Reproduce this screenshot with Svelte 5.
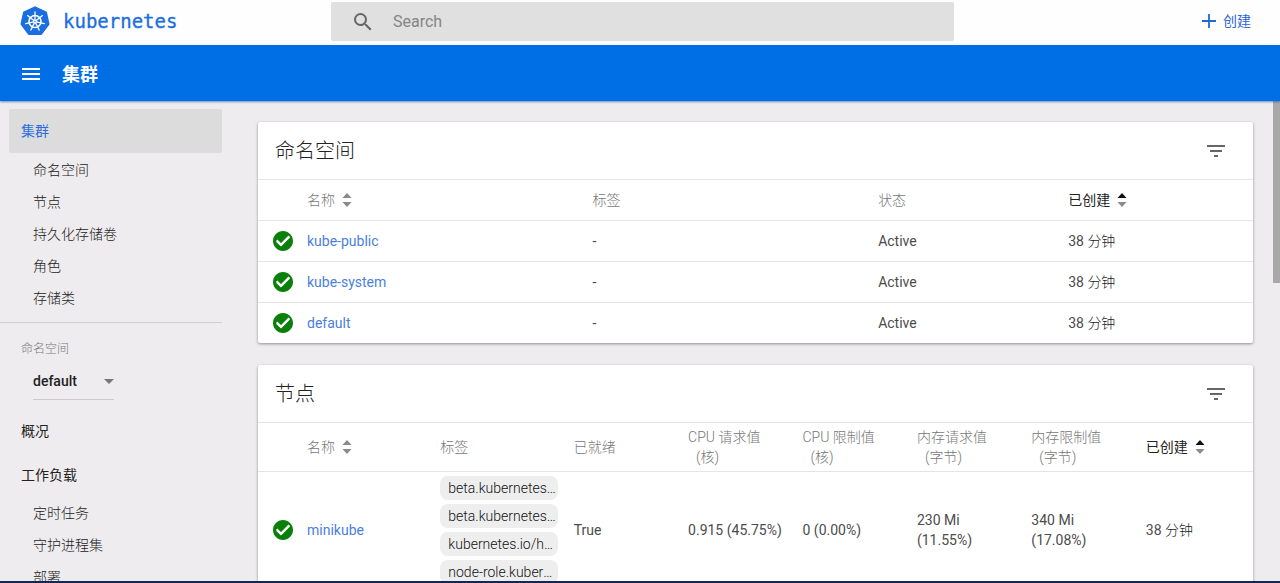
<script>
  const clusterItems = ['命名空间', '节点', '持久化存储卷', '角色', '存储类'];
  const workloadItems = ['定时任务', '守护进程集', '部署'];
  const namespaces = ['kube-public', 'kube-system', 'default'];
  const resourceHeads = [
    ['CPU 请求值', '(核)'],
    ['CPU 限制值', '(核)'],
    ['内存请求值', '(字节)'],
    ['内存限制值', '(字节)'],
  ];
  const nodeLabels = [
    'beta.kubernetes.io/arch: amd64',
    'beta.kubernetes.io/os: linux',
    'kubernetes.io/hostname: minikube',
    'node-role.kubernetes.io/master',
  ];
  const spokes = [0, 1, 2, 3, 4, 5, 6].map((n) => (n * 360) / 7);
</script>

{#snippet sortIcon(active)}
  <svg class="sort" viewBox="0 0 10 14" width="10" height="14" aria-hidden="true">
    <path d="M5 0 9.500 5H.5z" fill={active ? '#111' : '#8a8a8a'} />
    <path d="M5 14 .5 9h9z" fill="#8a8a8a" />
  </svg>
{/snippet}

{#snippet okIcon()}
  <svg class="ok" viewBox="2 2 20 20" width="20" height="20" role="img" aria-label="Ready">
    <path
      fill="#0a800a"
      d="M12 2C6.480 2 2 6.480 2 12s4.480 10 10 10 10-4.480 10-10S17.520 2 12 2zm-2 15-5-5 1.410-1.410L10 14.170l7.590-7.590L19 8l-9 9z"
    />
    <path d="M6 12.200 10 16l8.200-8.200" fill="none" stroke="#fff" stroke-width="2.200" />
  </svg>
{/snippet}

{#snippet cardHead(title)}
  <header class="card-head">
    <h2>{title}</h2>
    <button class="icon-btn" aria-label="Filter">
      <svg viewBox="0 0 24 24" width="24" height="24">
        <path fill="#666" d="M10 18h4v-2h-4v2zM3 6v2h18V6H3zm3 7h12v-2H6v2z" />
      </svg>
    </button>
  </header>
{/snippet}

<div class="page">
  <div class="topbar">
    <a class="brand" href="#home">
      <svg viewBox="0 0 30 30" width="30" height="30" aria-hidden="true">
        <path
          d="M15 1.500 25.800 6.600 28.300 18 21 27.800H9L1.700 18 4.200 6.600z"
          fill="#1a6ee0"
          stroke="#1a6ee0"
          stroke-width="2.400"
          stroke-linejoin="round"
        />
        <g fill="none" stroke="#fff">
          <circle cx="15" cy="15.500" r="6" stroke-width="1.600" />
          {#each spokes as angle}
            <path
              d="M15 14V6"
              stroke-width="1.300"
              stroke-linecap="round"
              transform="rotate({angle} 15 15.500)"
            />
          {/each}
        </g>
        <circle cx="15" cy="15.500" r="1.900" fill="#fff" />
        <circle cx="15" cy="15.500" r=".7" fill="#1a6ee0" />
      </svg>
      <span>kubernetes</span>
    </a>
    <label class="search">
      <svg viewBox="0 0 24 24" width="24" height="24" aria-hidden="true">
        <path
          fill="#666"
          d="M15.500 14h-.79l-.28-.27A6.470 6.470 0 0 0 16 9.500 6.500 6.500 0 1 0 9.500 16c1.610 0 3.090-.59 4.230-1.570l.27.28v.79l5 4.990L20.490 19l-4.990-5zm-6 0C7.010 14 5 11.990 5 9.500S7.010 5 9.500 5 14 7.010 14 9.500 11.990 14 9.500 14z"
        />
      </svg>
      <input type="text" placeholder="Search" aria-label="Search" />
    </label>
    <button class="create">
      <svg viewBox="0 0 14 14" width="14" height="14" aria-hidden="true">
        <path d="M7 0v14M0 7h14" stroke="#1f69cf" stroke-width="1.800" />
      </svg>
      创建
    </button>
  </div>

  <div class="actionbar">
    <button class="icon-btn" aria-label="Menu">
      <svg viewBox="0 0 18 14" width="18" height="14">
        <path d="M0 1h18M0 6h18M0 11h18" stroke="#fff" stroke-width="2" />
      </svg>
    </button>
    <h1>集群</h1>
  </div>

  <div class="body">
    <nav>
      <a class="active" href="#cluster">集群</a>
      {#each clusterItems as item}
        <a class="sub" href="#{item}">{item}</a>
      {/each}
      <hr />
      <label class="ns-label" for="ns">命名空间</label>
      <div class="ns">
        <select id="ns"><option>default</option></select>
        <svg viewBox="0 0 10 5" width="10" height="5" aria-hidden="true">
          <path d="M0 0h10L5 5z" fill="#777" />
        </svg>
      </div>
      <a class="top" href="#overview">概况</a>
      <a class="top" href="#workloads">工作负载</a>
      {#each workloadItems as item}
        <a class="sub" href="#{item}">{item}</a>
      {/each}
    </nav>

    <main>
      <section class="card">
        {@render cardHead('命名空间')}
        <table>
          <colgroup>
            <col class="c-icon" /><col class="c-wide" /><col class="c-wide" /><col class="c-mid" /><col />
          </colgroup>
          <thead>
            <tr>
              <th></th>
              <th>名称{@render sortIcon(false)}</th>
              <th>标签</th>
              <th>状态</th>
              <th class="sorted">已创建{@render sortIcon(true)}</th>
            </tr>
          </thead>
          <tbody>
            {#each namespaces as name}
              <tr>
                <td>{@render okIcon()}</td>
                <td><a href="#{name}">{name}</a></td>
                <td>-</td>
                <td>Active</td>
                <td>38 <span class="cjk">分钟</span></td>
              </tr>
            {/each}
          </tbody>
        </table>
      </section>

      <section class="card">
        {@render cardHead('节点')}
        <table class="nodes">
          <colgroup>
            <col class="c-icon" /><col class="c-name" /><col class="c-name" />
            <col class="c-num" /><col class="c-num" /><col class="c-num" /><col class="c-num" /><col class="c-num" />
            <col />
          </colgroup>
          <thead>
            <tr>
              <th></th>
              <th>名称{@render sortIcon(false)}</th>
              <th>标签</th>
              <th>已就绪</th>
              {#each resourceHeads as [label, unit]}
                <th>{label}<span class="unit">{unit}</span></th>
              {/each}
              <th class="sorted">已创建{@render sortIcon(true)}</th>
            </tr>
          </thead>
          <tbody>
            <tr>
              <td>{@render okIcon()}</td>
              <td><a href="#minikube">minikube</a></td>
              <td>
                <div class="chips">
                  {#each nodeLabels as label}
                    <span class="chip">{label}</span>
                  {/each}
                </div>
              </td>
              <td>True</td>
              <td>0.915 (45.75%)</td>
              <td>0 (0.00%)</td>
              <td>230 Mi<br />(11.55%)</td>
              <td>340 Mi<br />(17.08%)</td>
              <td>38 <span class="cjk">分钟</span></td>
            </tr>
          </tbody>
        </table>
      </section>
    </main>
    <div class="thumb"></div>
  </div>
  <div class="edge"></div>
</div>

<style>
  :global(body) {
    margin: 0;
  }
  .page {
    display: flex;
    flex-direction: column;
    height: 100vh;
    overflow: hidden;
    background: #eeecee;
    color: #333;
    font: 14px/20px Roboto, 'Noto Sans CJK SC', sans-serif;
  }
  a {
    color: inherit;
    text-decoration: none;
  }
  button {
    border: 0;
    padding: 0;
    background: none;
    font: inherit;
    cursor: pointer;
  }
  svg {
    display: block;
  }
  h1,
  h2 {
    margin: 0;
  }

  .topbar {
    display: grid;
    grid-template-columns: 1fr 623px 1fr;
    align-items: center;
    flex: none;
    box-sizing: border-box;
    height: 45px;
    padding: 0 15px 4px 20px;
    background: #fefefe;
  }
  .brand {
    display: flex;
    align-items: center;
    gap: 13px;
    color: #1a6ee0;
    font: 19px/24px 'DejaVu Sans Mono', monospace;
    -webkit-text-stroke: 0.3px #1a6ee0;
  }
  .search {
    display: flex;
    align-items: center;
    gap: 18px;
    height: 39px;
    margin-top: 2px;
    padding-left: 20px;
    border-radius: 2px;
    background: #dfe0df;
  }
  .search input {
    flex: 1;
    min-width: 0;
    border: 0;
    padding: 0;
    outline: 0;
    background: none;
    color: #333;
    font: 16px/20px Roboto, sans-serif;
  }
  .search input::placeholder {
    color: #858585;
    opacity: 1;
  }
  .create {
    display: flex;
    align-items: center;
    justify-self: end;
    gap: 7px;
    margin-right: 14px;
    color: #2f67d6;
  }

  .actionbar {
    display: flex;
    align-items: center;
    gap: 22px;
    flex: none;
    z-index: 1;
    box-sizing: border-box;
    height: 56px;
    padding: 3px 22px 0;
    background: #006fe5;
    color: #fff;
    box-shadow: 0 1px 2px rgba(20, 80, 160, 0.6);
  }
  .actionbar h1 {
    font-size: 18px;
    font-weight: 700;
    line-height: 24px;
  }

  .body {
    position: relative;
    display: flex;
    flex: 1;
    min-height: 0;
    overflow: hidden;
  }
  nav {
    display: flex;
    flex-direction: column;
    flex: none;
    width: 222px;
    padding-top: 8px;
  }
  nav a {
    flex: none;
  }
  nav .active {
    margin: 0 0 1px 9px;
    padding: 12px;
    border-radius: 2px;
    background: #dddcdd;
    color: #2a6ce0;
  }
  nav .sub {
    padding: 6px 0 6px 33px;
    color: #222;
    font-weight: 300;
  }
  nav .top {
    padding: 12px 0 12px 21px;
    color: #222;
  }
  hr {
    width: 100%;
    margin: 8px 0 0;
    border: 0;
    border-top: 1px solid #d0ced0;
  }
  .ns-label {
    margin: 16px 0 0 21px;
    color: #777;
    font-size: 12px;
    font-weight: 300;
  }
  .ns {
    display: flex;
    align-items: center;
    width: 81px;
    margin: 4px 0 9px 33px;
    border-bottom: 1px solid #ccc;
  }
  .ns select {
    flex: 1;
    min-width: 0;
    height: 36px;
    border: 0;
    padding: 0;
    appearance: none;
    background: none;
    color: #222;
    font: 500 14px/20px Roboto, sans-serif;
  }

  main {
    display: flex;
    flex-direction: column;
    gap: 22px;
    flex: 1;
    min-width: 0;
    padding: 21px 27px 0 36px;
  }
  .card {
    flex: none;
    border-radius: 2px;
    background: #fff;
    box-shadow: 0 1px 3px rgba(0, 0, 0, 0.4);
  }
  .card-head {
    display: flex;
    align-items: center;
    justify-content: space-between;
    height: 57px;
    padding: 0 25px 0 17px;
  }
  h2 {
    color: #222;
    font-size: 20px;
    font-weight: 300;
    line-height: 28px;
  }
  table {
    width: 100%;
    border-collapse: separate;
    border-spacing: 0;
    table-layout: fixed;
  }
  .c-icon {
    width: 49px;
  }
  .c-wide {
    width: 28.7%;
  }
  .c-mid {
    width: 19.1%;
  }
  .c-name {
    width: 13.4%;
  }
  .c-num {
    width: 11.5%;
  }
  th,
  td {
    height: 40px;
    padding: 0;
    border-top: 1px solid #e4e4e4;
    text-align: left;
    vertical-align: middle;
  }
  th {
    color: #777;
    font-weight: 300;
  }
  .nodes th {
    height: 48px;
  }
  th.sorted {
    color: #222;
    font-weight: 400;
  }
  td {
    color: #4c4c4c;
  }
  .cjk {
    color: #222;
    font-weight: 300;
  }
  td a {
    color: #4a7fdc;
  }
  .sort {
    display: inline-block;
    margin-left: 7px;
    vertical-align: -2px;
  }
  .ok {
    margin-left: 15px;
  }
  .unit {
    display: block;
    padding-left: 8px;
  }
  .chips {
    display: flex;
    flex-direction: column;
    gap: 4px;
    padding: 4px 16px 4px 0;
  }
  .chip {
    overflow: hidden;
    padding: 2px 0 2px 8px;
    border-radius: 8px;
    background: #efeeef;
    color: #111;
    font-weight: 300;
    text-overflow: ellipsis;
    white-space: nowrap;
  }
  .thumb {
    position: absolute;
    top: 0;
    right: 0;
    width: 7px;
    height: 38%;
    background: #a9a8a9;
  }
  .edge {
    flex: none;
    height: 2px;
    background: #12284f;
  }
</style>
